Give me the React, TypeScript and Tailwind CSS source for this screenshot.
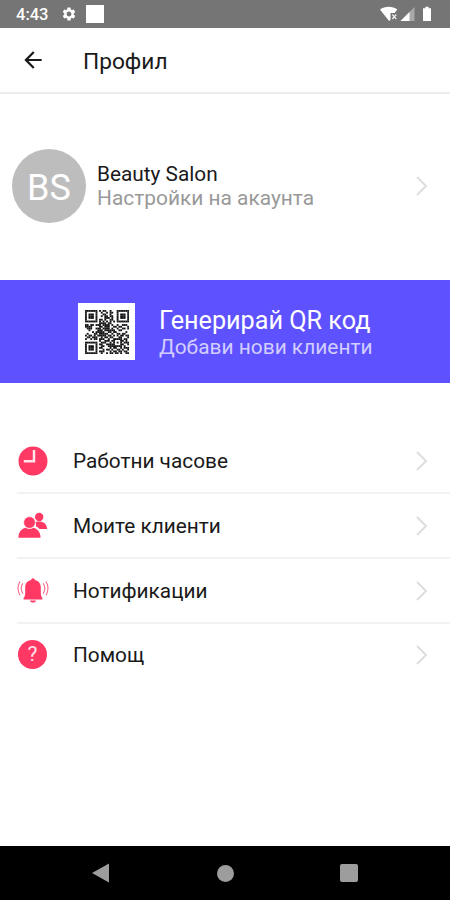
import { MdSettings, MdArrowBack } from 'react-icons/md';

const qrRows = [
  '1111111010110010001111111',
  '1000001001001011001000001',
  '1011101000110010001011101',
  '1011101001011011001011101',
  '1011101000011101001011101',
  '1000001011010011001000001',
  '1111111010101010101111111',
  '0000000011110110000000000',
  '1101101110111101001001110',
  '1111000011011100110110001',
  '0111001110111101001001101',
  '0010000111011111100110000',
  '0000101111100110110000010',
  '0100011011111001001101100',
  '1011010111110110101011011',
  '0110111001011011000110001',
  '1001011011100100111110110',
  '0000000010011101100011010',
  '1111111001110010101010111',
  '1000001011001111100011001',
  '1011101001100111111110100',
  '1011101011000010110010111',
  '1011101000101101001101001',
  '1000001011100010110110110',
  '1111111001001011011010011',
];

const Chevron = () => (
  <svg width="14" height="22" viewBox="0 0 14 22" fill="none" stroke="#dedede" strokeWidth="2" className="shrink-0">
    <path d="M2 2L11 11L2 20" />
  </svg>
);

const ClockIcon = () => (
  <svg width="30" height="30" viewBox="0 0 30 30">
    <circle cx="15" cy="15" r="14.5" fill="#ff3864" />
    <path d="M16 4V15.2H5.8" fill="none" stroke="#ffe6eb" strokeWidth="2.5" />
  </svg>
);

const ClientsIcon = () => (
  <svg width="30" height="30" viewBox="0 0 30 30" fill="#ff3864">
    <circle cx="21.2" cy="6" r="4.2" />
    <path d="M16.8 11.3C19 10.2 24.5 10.2 26.6 12.2C28.2 13.9 29.1 15.7 29.1 18H21.4C20.4 16.7 19 15.8 17.8 15.3C18.3 13.9 18 12.5 16.8 11.3Z" />
    <circle cx="11.5" cy="11.5" r="5.9" stroke="#fff" strokeWidth="0.8" />
    <path d="M0.4 26.8C0.5 21 3.2 18 7.6 16.7C10 18.3 13 18.3 15.4 16.7C19.8 18 22.4 21 22.6 26.8Z" />
  </svg>
);

const BellIcon = () => (
  <svg width="32" height="30" viewBox="0 0 32 30" fill="#ff3864">
    <path d="M16 2.3C17.1 2.3 17.8 3 17.8 4.1C21.9 4.9 23.8 7.8 23.8 11.5V17C23.8 19.3 24.4 21 25.4 22.1V23.6H6.6V22.1C7.6 21 8.2 19.3 8.2 17V11.5C8.2 7.8 10.1 4.9 14.2 4.1C14.2 3 14.9 2.3 16 2.3Z" />
    <path d="M12.9 24.4H19.1C18.6 25.9 17.4 26.5 16 26.5C14.6 26.5 13.4 25.9 12.9 24.4Z" />
    <g fill="none" stroke="#ff3864" strokeWidth="1.1" opacity="0.75">
      <path d="M3 5.5C.6 9.5 .6 15 3 19.2M5.8 7.3C3.9 10.4 3.9 14.5 5.8 17.7" />
      <path d="M29 5.5C31.4 9.5 31.4 15 29 19.2M26.2 7.3C28.1 10.4 28.1 14.5 26.2 17.7" />
    </g>
  </svg>
);

const HelpIcon = () => (
  <div className="mr-px flex h-[29px] w-[29px] items-center justify-center rounded-full bg-[#ff3864] text-[21px] leading-none text-[#ffe3e9]">
    ?
  </div>
);

const menu = [
  { label: 'Работни часове', icon: <ClockIcon />, row: 'h-[65px] border-b-2' },
  { label: 'Моите клиенти', icon: <ClientsIcon />, row: 'h-[65px] border-b-2' },
  { label: 'Нотификации', icon: <BellIcon />, row: 'h-[65px] border-b-2' },
  { label: 'Помощ', icon: <HelpIcon />, row: 'h-[61px]' },
];

const StatusBar = () => (
  <div className="flex h-7 items-center bg-[#757575] px-4 text-white">
    <span className="w-[45px] pt-0.5 text-[16.5px] font-medium leading-none">4:43</span>
    <MdSettings className="h-4 w-4" />
    <span className="ml-[9px] h-[18px] w-[18px] bg-white" />
    <svg width="54" height="18" viewBox="0 0 54 18" className="ml-auto">
      <path d="M0 4.5C5 .8 12.5 .8 17.3 4.5L14.6 8H10.5V14.8L9.1 16Z" fill="#fff" />
      <path d="M12.3 9.5L16.3 14M16.3 9.5L12.3 14" stroke="#eee" strokeWidth="1.2" />
      <path d="M34.5 2V16H20.5Z" fill="#a9a9a9" />
      <path d="M29.5 7V16H20.5Z" fill="#fff" />
      <path d="M45.3 1.8H48.7V3.2H51V16H43V3.2H45.3Z" fill="#fff" />
    </svg>
  </div>
);

const QrCode = () => (
  <div className="flex h-[57px] w-[57px] items-center justify-center bg-white">
    <svg width="44" height="44" viewBox="0 0 25 25">
      {qrRows.map((row, y) =>
        [...row].map((cell, x) =>
          cell === '1' ? <rect key={`${x}-${y}`} x={x} y={y} width="1.05" height="1.05" fill="#141414" /> : null
        )
      )}
    </svg>
  </div>
);

export default function App() {
  return (
    <div className="flex h-[900px] w-[450px] flex-col overflow-hidden bg-white font-['Roboto',sans-serif] text-[#1a1a1a]">
      <StatusBar />

      <header className="flex h-[66px] items-center border-b-2 border-[#ececec] pl-5">
        <MdArrowBack className="h-[26px] w-[26px]" />
        <h1 className="ml-[37px] pt-1 text-[22.7px]">Профил</h1>
      </header>

      <section className="flex h-[184px] items-center pl-3 pr-[21px]">
        <div className="flex h-[74px] w-[74px] items-center justify-center rounded-full bg-[#bdbdbd] pt-1 text-[36px] text-white">
          BS
        </div>
        <div className="ml-[11px] flex-1 leading-6">
          <p className="text-[20.8px]">Beauty Salon</p>
          <p className="text-[20.9px] text-[#999]">Настройки на акаунта</p>
        </div>
        <Chevron />
      </section>

      <section className="mt-[2px] flex h-[103px] items-center bg-[#5e51ff] pl-[78px]">
        <QrCode />
        <div className="ml-6 pt-[3px] text-white">
          <p className="text-[25.2px] leading-[27px]">Генерирай QR код</p>
          <p className="text-[20.9px] leading-[26px] text-[#d2ceff]">Добави нови клиенти</p>
        </div>
      </section>

      <nav className="mt-[46px]">
        {menu.map((item) => (
          <div key={item.label} className="pl-[17px]">
            <div className={`flex items-center border-[#f2f2f2] pr-[21px] ${item.row}`}>
              <div className="flex w-8 justify-center">{item.icon}</div>
              <span className="ml-6 flex-1 pt-[3px] text-[20.8px]">{item.label}</span>
              <Chevron />
            </div>
          </div>
        ))}
      </nav>

      <footer className="mt-auto flex h-[54px] items-center justify-between bg-black px-[92px]">
        <svg width="17" height="20" viewBox="0 0 17 20" fill="#9d9d9d">
          <path d="M17 .5V19.5L0 10Z" />
        </svg>
        <span className="ml-0.5 h-[17px] w-[17px] rounded-full bg-[#9d9d9d]" />
        <span className="h-[18px] w-[18px] rounded-[2px] bg-[#9d9d9d]" />
      </footer>
    </div>
  );
}
